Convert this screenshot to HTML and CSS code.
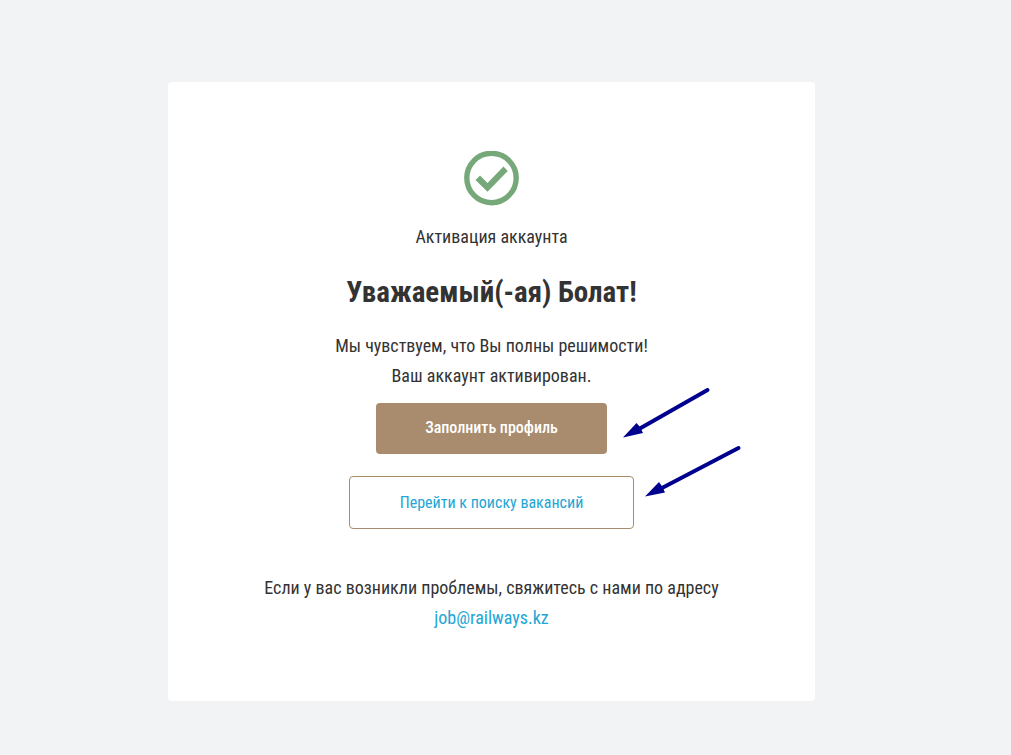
FILE: index.html
```html
<!DOCTYPE html>
<html lang="ru">
<head>
  <meta charset="UTF-8">
  <meta name="viewport" content="width=device-width, initial-scale=1.0">
  <title>Активация аккаунта</title>
  <link rel="stylesheet" href="styles.css">
</head>
<body>
  <main class="card">
    <svg class="card__icon" viewBox="0 0 55 55" aria-hidden="true">
      <circle cx="27.5" cy="27" r="24.7" fill="none" stroke="#76a87a" stroke-width="5.4"/>
      <path d="M11.5 29l4.5-4.5 7.5 7.5 16-16.5 4.3 4.5-20.3 20.7z" fill="#76a87a"/>
    </svg>
    <p class="card__label">Активация аккаунта</p>
    <h1 class="card__title">Уважаемый(-ая) Болат!</h1>
    <p class="card__text">Мы чувствуем, что Вы полны решимости!<br>Ваш аккаунт активирован.</p>
    <div class="actions">
      <div class="action">
        <button class="btn btn--primary" type="button">Заполнить профиль</button>
        <svg class="arrow arrow--first" viewBox="0 0 90 54" aria-hidden="true">
          <path d="M85.500 3L17 42" stroke="#00008f" stroke-width="4" stroke-linecap="round"/>
          <path d="M1 50.500L14.500 36l3.500 4 3 6z" fill="#00008f"/>
        </svg>
      </div>
      <div class="action">
        <a class="btn btn--outline" href="#">Перейти к поиску вакансий</a>
        <svg class="arrow arrow--second" viewBox="0 0 98 54" aria-hidden="true">
          <path d="M94.500 3L18 43" stroke="#00008f" stroke-width="4" stroke-linecap="round"/>
          <path d="M1 51.500L15 37l3.500 5 2.500 5.500z" fill="#00008f"/>
        </svg>
      </div>
    </div>
    <p class="card__text">Если у вас возникли проблемы, свяжитесь с нами по адресу<br><a class="card__link" href="mailto:job@railways.kz">job@railways.kz</a></p>
  </main>
</body>
</html>
```
FILE: styles.css
```css
body{
  margin: 0;
  padding: 82px 196px 54px 168px;
  background: #f1f3f5;
  color: #333;
  font-family: "Roboto Condensed", Roboto, sans-serif;
  font-size: 18px;
  line-height: 30px;
}

.card{
  padding: 69px 20px 68px;
  border-radius: 4px;
  background: #fff;
  text-align: center;
}

.card__icon{
  display: block;
  width: 55px;
  height: 55px;
  margin: 0 auto;
}

.card__label{
  margin: 16px 0 24px;
}

.card__title{
  margin: 0 0 22px;
  font-size: 29px;
  line-height: 33px;
}

.card__text{
  margin: 0;
}

.card__link{
  color: #23a6d5;
  text-decoration: none;
}

.actions{
  display: flex;
  flex-direction: column;
  align-items: center;
  gap: 22px;
  margin: 12px 0 44px;
}

.action{
  position: relative;
}

.btn{
  display: block;
  box-sizing: border-box;
  border-radius: 4px;
  font-family: inherit;
  font-size: 16px;
  line-height: 19px;
  text-decoration: none;
  cursor: pointer;
}

.btn--primary{
  padding: 15px 49px 17px;
  border: 0;
  background: #a98c6d;
  color: #fff;
  font-weight: 500;
}

.btn--outline{
  padding: 16px 50px;
  border: 1px solid #a98c6d;
  color: #23a6d5;
}

/* pointers beside the buttons */
.arrow{
  position: absolute;
  left: 100%;
}

.arrow--first{
  top: -16px;
  width: 90px;
  height: 54px;
  margin-left: 15px;
}

.arrow--second{
  top: -31px;
  width: 98px;
  height: 54px;
  margin-left: 10px;
}
```
